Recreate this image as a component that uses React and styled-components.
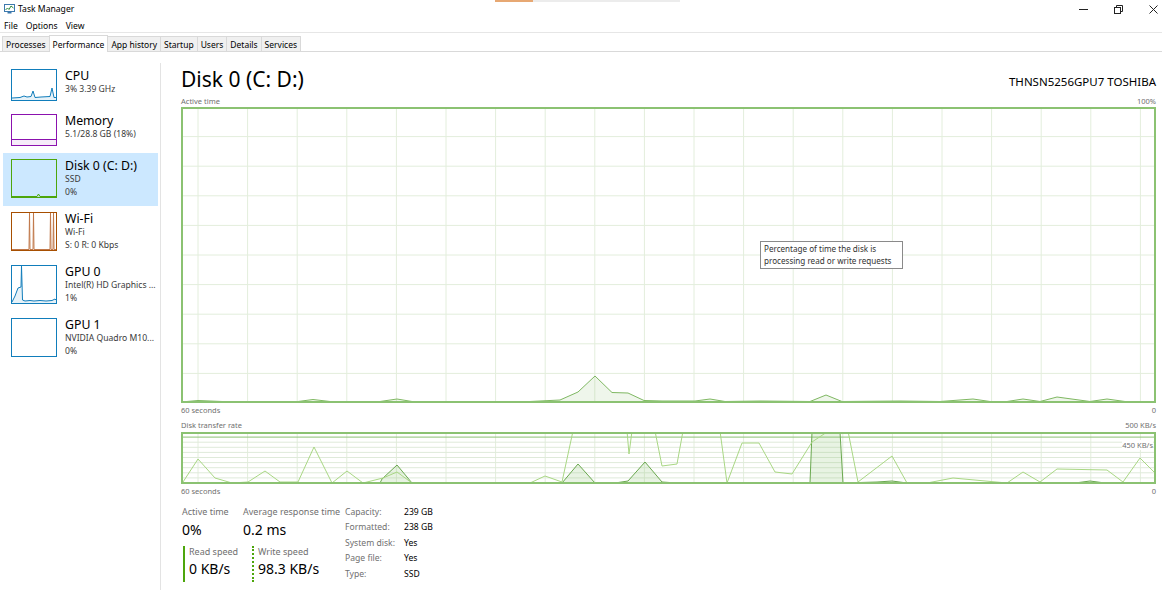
import React from 'react'
import styled, { createGlobalStyle } from 'styled-components'

const GlobalStyle = createGlobalStyle`
  * { box-sizing: border-box; }
  html, body { margin: 0; padding: 0; background: #fff; }
  body {
    font-family: 'Noto Sans', 'Open Sans', sans-serif;
    color: #000;
    overflow: hidden;
  }
`

const Window = styled.div`
  position: relative;
  width: 1162px;
  height: 600px;
  display: flex;
  flex-direction: column;
  background: #fff;
  overflow: hidden;
`
const Artifact = styled.div`
  position: absolute;
  top: 0;
  left: ${props => props.$left}px;
  width: ${props => props.$width}px;
  height: 2px;
  background: ${props => props.$color};
`
const TitleBar = styled.div`
  height: 18px;
  display: flex;
  align-items: center;
  padding-left: 4px;
`
const AppTitle = styled.span`
  font-size: 8.6px;
  margin-left: 3px;
  line-height: 12px;
`
const Controls = styled.div`
  margin-left: auto;
  display: flex;
  align-items: center;
  gap: 26px;
  padding-right: 4px;
  height: 18px;
`
const MenuBar = styled.div`
  height: 15px;
  display: flex;
  align-items: center;
  gap: 8px;
  padding: 1px 0 0 4px;
  border-bottom: 1px solid #e6e6e6;
  font-size: 8.6px;
`
const TabBar = styled.div`
  height: 19px;
  display: flex;
  align-items: flex-end;
  padding-left: 2px;
  border-bottom: 1px solid #d9d9d9;
`
const Tab = styled.div`
  position: relative;
  height: ${props => (props.$active ? 17 : 15)}px;
  margin-bottom: ${props => (props.$active ? -1 : 0)}px;
  margin-right: -1px;
  padding: 0 3px;
  display: flex;
  align-items: center;
  font-size: 8.5px;
  background: ${props => (props.$active ? '#fff' : '#f0f0f0')};
  border: 1px solid #d9d9d9;
  border-bottom: 0;
  z-index: ${props => (props.$active ? 1 : 0)};
`
const Body = styled.div`
  flex: 1;
  display: flex;
  padding-top: 11px;
`
const Sidebar = styled.div`
  width: 161px;
  border-right: 1px solid #e3e3e3;
  margin-bottom: 10px;
`
const SideItem = styled.div`
  margin-left: 3px;
  width: 155px;
  height: ${props => props.$height}px;
  display: flex;
  gap: 8px;
  padding: 6px 0 0 8px;
  background: ${props => (props.$selected ? '#cce8ff' : 'transparent')};
`
const Thumb = styled.div`
  width: 46px;
  height: ${props => props.$height}px;
  border: 1px solid ${props => props.$color};
  flex-shrink: 0;
  svg { display: block; }
`
const SideText = styled.div`
  margin-top: -1px;
  display: flex;
  flex-direction: column;
  white-space: nowrap;
`
const SideName = styled.div`
  font-size: 12.3px;
  line-height: 15px;
`
const SideSub = styled.div`
  font-size: 8.6px;
  line-height: 13px;
  color: #3a3a3a;
`
const Main = styled.div`
  flex: 1;
  padding: 3px 6px 0 20px;
  display: flex;
  flex-direction: column;
`
const HeaderRow = styled.div`
  display: flex;
  justify-content: space-between;
  align-items: center;
  height: 26px;
`
const DiskTitle = styled.div`
  font-size: 21px;
  line-height: 26px;
`
const Model = styled.div`
  font-size: 11.5px;
  line-height: 14px;
  padding-top: 6px;
`
const AxisRow = styled.div`
  display: flex;
  justify-content: space-between;
  font-size: 7.5px;
  line-height: 10px;
  color: #707070;
  margin-top: ${props => props.$top || 0}px;
`
const Graph = styled.div`
  position: relative;
  width: 975px;
  height: ${props => props.$height}px;
  margin-top: ${props => props.$top || 0}px;
  svg { display: block; }
`
const Tooltip = styled.div`
  position: absolute;
  left: 579px;
  top: 134px;
  padding: 1px 10px 1px 3px;
  border: 1px solid #8a8a8a;
  background: #fff;
  font-size: 8.1px;
  line-height: 12px;
  color: #333;
  white-space: nowrap;
`
const InnerLabel = styled.div`
  position: absolute;
  right: 3px;
  top: 8px;
  font-size: 7.5px;
  line-height: 10px;
  color: #707070;
  background: #fff;
`
const Stats = styled.div`
  display: flex;
  margin-top: 10px;
`
const LeftStats = styled.div`
  width: 164px;
  display: flex;
  flex-direction: column;
`
const StatRow = styled.div`
  display: flex;
  padding-left: ${props => props.$pad || 0}px;
  margin-top: ${props => props.$top || 0}px;
`
const StatBlock = styled.div`
  width: ${props => props.$width}px;
  display: flex;
  flex-direction: column;
  white-space: nowrap;
`
const SpeedBlock = styled.div`
  width: ${props => props.$width}px;
  height: 36px;
  padding-left: 4px;
  border-left: 2px ${props => (props.$dotted ? 'dotted' : 'solid')} #4da60c;
  display: flex;
  flex-direction: column;
  white-space: nowrap;
`
const StatLabel = styled.div`
  font-size: 9px;
  line-height: 12px;
  color: #707070;
`
const StatValue = styled.div`
  font-size: 14px;
  line-height: ${props => props.$lh || 20}px;
  margin-top: ${props => props.$top || 0}px;
`
const PropGrid = styled.div`
  display: grid;
  grid-template-columns: 59px auto;
  margin-top: -1px;
  font-size: 8.6px;
  line-height: 14.75px;
`
const PropKey = styled.div`
  color: #707070;
`
const PropVal = styled.div`
  color: #000;
`

const pts = arr => arr.map(p => p.join(',')).join(' ')

const activePoints = [
  [181, 403], [198, 401.5], [222, 402.5], [240, 403], [298, 402.5], [313, 400.5], [330, 402.5],
  [380, 402.5], [397, 400], [415, 403], [530, 402.5], [560, 401], [578, 393], [595, 377],
  [612, 393.5], [628, 394], [644, 401.5], [662, 402], [695, 402], [710, 400], [725, 402.5],
  [760, 402], [810, 402.5], [826, 396], [842, 402.5], [900, 402], [940, 402.5], [973, 400],
  [990, 402.5], [1007, 402.5], [1023, 400], [1040, 402.5], [1057, 398], [1090, 402.5],
  [1107, 400], [1125, 402.5], [1156, 402.5]
]

const readPoints = [
  [181, 484], [183, 483], [198, 460], [215, 479], [232, 484], [248, 483], [265, 472], [280, 483],
  [298, 483], [314, 448], [332, 484], [347, 472], [363, 484], [383, 479], [397, 473], [412, 484],
  [530, 484], [545, 477], [562, 483], [573, 432], [627, 432], [629, 455], [632, 432], [655, 432],
  [662, 467], [677, 465], [683, 432], [720, 432], [727, 484], [742, 444], [759, 444], [775, 473],
  [792, 475], [812, 443], [827, 433], [848, 432], [858, 483], [892, 457], [907, 484], [927, 484],
  [953, 479], [1007, 484], [1023, 473], [1040, 483], [1057, 470], [1107, 471], [1123, 483],
  [1140, 459], [1156, 475]
]

const writePoints = [
  [181, 484], [380, 484], [382, 480], [397, 466], [412, 484], [562, 484], [578, 465], [595, 484],
  [615, 484], [628, 482], [645, 463], [662, 483], [677, 484], [810, 484], [812, 433], [840, 433],
  [843, 484], [877, 483], [892, 482], [907, 484], [1075, 484], [1090, 482], [1105, 484], [1156, 484]
]

const vLines = Array.from({ length: 20 }, (_, i) => 198 + 49.6 * i)

function ActiveGraph() {
  const hLines = Array.from({ length: 9 }, (_, j) => 108 + 29.6 * (j + 1))
  return (
    <svg width="975" height="296" viewBox="181 108 975 296">
      {vLines.map(x => <line key={x} x1={x} y1={108} x2={x} y2={404} stroke="#e3eedc" strokeWidth="1" />)}
      {hLines.map(y => <line key={y} x1={181} y1={y} x2={1156} y2={y} stroke="#e3eedc" strokeWidth="1" />)}
      <polygon points={pts([...activePoints, [1156, 404], [181, 404]])} fill="rgba(139,194,114,0.14)" />
      <polyline points={pts(activePoints)} fill="none" stroke="#7fb862" strokeWidth="1" />
      <rect x="182" y="109" width="973" height="294" fill="none" stroke="#8bc272" strokeWidth="2" />
    </svg>
  )
}

function TransferGraph() {
  const hLines = Array.from({ length: 9 }, (_, j) => 433 + 5.1 * (j + 1))
  return (
    <svg width="975" height="52" viewBox="181 433 975 52">
      {vLines.map(x => <line key={x} x1={x} y1={433} x2={x} y2={485} stroke="#e3eedc" strokeWidth="1" />)}
      {hLines.map((y, j) => (
        <line key={y} x1={181} y1={y} x2={1156} y2={y} stroke={j === 0 ? '#8bc272' : '#dfeada'} strokeWidth="1" />
      ))}
      <polygon points={pts(writePoints)} fill="rgba(139,194,114,0.2)" />
      <polyline points={pts(writePoints)} fill="none" stroke="#6aa84f" strokeWidth="1" />
      <polyline points={pts(readPoints)} fill="none" stroke="#a9d784" strokeWidth="1" />
      <rect x="182" y="434" width="973" height="50" fill="none" stroke="#8bc272" strokeWidth="2" />
    </svg>
  )
}

function Spark({ points, color, fill, h }) {
  return (
    <svg width="44" height={h} viewBox={`0 0 44 ${h}`}>
      {fill && <polygon points={`0,${h} ${points} 44,${h}`} fill={fill} />}
      <polyline points={points} fill="none" stroke={color} strokeWidth="1" />
    </svg>
  )
}

function AppIcon() {
  return (
    <svg width="11" height="10" viewBox="0 0 11 10">
      <rect x="0.5" y="0.5" width="10" height="7" fill="#fff" stroke="#3d79ad" />
      <polyline points="1.5,6 3.5,4 5,5.5 7,2 9.5,4" fill="none" stroke="#2f8a3c" strokeWidth="1" />
      <rect x="3.5" y="8" width="4" height="1.5" fill="#3d79ad" />
    </svg>
  )
}

function MinimizeIcon() {
  return (
    <svg width="9" height="9" viewBox="0 0 9 9">
      <line x1="0" y1="4.5" x2="9" y2="4.5" stroke="#222" strokeWidth="1" />
    </svg>
  )
}

function RestoreIcon() {
  return (
    <svg width="9" height="9" viewBox="0 0 9 9">
      <rect x="0.5" y="2.5" width="6" height="6" fill="none" stroke="#222" />
      <polyline points="2.5,2.5 2.5,0.5 8.5,0.5 8.5,6.5 6.5,6.5" fill="none" stroke="#222" />
    </svg>
  )
}

function CloseIcon() {
  return (
    <svg width="9" height="9" viewBox="0 0 9 9">
      <line x1="0.5" y1="0.5" x2="8.5" y2="8.5" stroke="#222" />
      <line x1="8.5" y1="0.5" x2="0.5" y2="8.5" stroke="#222" />
    </svg>
  )
}

const resources = [
  {
    name: 'CPU', lines: ['3%  3.39 GHz'], color: '#117dbb', h: 45, th: 32,
    spark: <Spark h={30} color="#117dbb" fill="rgba(17,125,187,0.1)"
      points="0,28 8,27.5 12,26 15,27 19,26.5 21,21 23,27.5 29,27 38,26.5 40,18 42,27.5 44,27.5" />
  },
  {
    name: 'Memory', lines: ['5.1/28.8 GB (18%)'], color: '#8b12ae', h: 45, th: 32,
    spark: <Spark h={30} color="#8b12ae" fill="rgba(139,18,174,0.08)" points="0,24.5 44,24.5" />
  },
  {
    name: 'Disk 0 (C: D:)', lines: ['SSD', '0%'], color: '#4da60c', h: 53, th: 39, selected: true,
    spark: <Spark h={37} color="#4da60c" fill="rgba(77,166,12,0.1)"
      points="0,36.5 25,36.5 26.5,34 28,36.5 44,36.5" />
  },
  {
    name: 'Wi-Fi', lines: ['Wi-Fi', 'S: 0  R: 0 Kbps'], color: '#a74f01', h: 53, th: 39,
    spark: <Spark h={37} color="#c0784a"
      points="0,36.5 17,36.5 17.5,0 18,36.5 21,36.5 21.5,0 22,36.5 38,36.5 38.5,0 39,36.5 41,36.5 41.5,0 42,36.5 44,36.5" />
  },
  {
    name: 'GPU 0', lines: ['Intel(R) HD Graphics ...', '1%'], color: '#117dbb', h: 53, th: 39,
    spark: <Spark h={37} color="#117dbb" fill="rgba(17,125,187,0.1)"
      points="0,36 3,30 6,22 9,21 9.5,0 10.5,34 13,35 18,34.5 22,35 28,34.5 34,35 40,34.5 43,33 44,34" />
  },
  {
    name: 'GPU 1', lines: ['NVIDIA Quadro M10...', '0%'], color: '#117dbb', h: 53, th: 39,
    spark: null
  }
]

const tabs = ['Processes', 'Performance', 'App history', 'Startup', 'Users', 'Details', 'Services']

const props = [
  ['Capacity:', '239 GB'],
  ['Formatted:', '238 GB'],
  ['System disk:', 'Yes'],
  ['Page file:', 'Yes'],
  ['Type:', 'SSD']
]

export default function App() {
  return (
    <Window>
      <GlobalStyle />
      <Artifact $left={495} $width={38} $color="#e7a873" />
      <Artifact $left={533} $width={147} $color="#ececec" />
      <TitleBar>
        <AppIcon />
        <AppTitle>Task Manager</AppTitle>
        <Controls>
          <MinimizeIcon />
          <RestoreIcon />
          <CloseIcon />
        </Controls>
      </TitleBar>
      <MenuBar>
        <span>File</span>
        <span>Options</span>
        <span>View</span>
      </MenuBar>
      <TabBar>
        {tabs.map(t => (
          <Tab key={t} $active={t === 'Performance'}>{t}</Tab>
        ))}
      </TabBar>
      <Body>
        <Sidebar>
          {resources.map(r => (
            <SideItem key={r.name} $height={r.h} $selected={r.selected}>
              <Thumb $height={r.th} $color={r.color}>{r.spark}</Thumb>
              <SideText>
                <SideName>{r.name}</SideName>
                {r.lines.map(l => <SideSub key={l}>{l}</SideSub>)}
              </SideText>
            </SideItem>
          ))}
        </Sidebar>
        <Main>
          <HeaderRow>
            <DiskTitle>Disk 0 (C: D:)</DiskTitle>
            <Model>THNSN5256GPU7 TOSHIBA</Model>
          </HeaderRow>
          <AxisRow $top={4}>
            <span>Active time</span>
            <span>100%</span>
          </AxisRow>
          <Graph $height={296} $top={1}>
            <ActiveGraph />
            <Tooltip>
              Percentage of time the disk is
              <br />
              processing read or write requests
            </Tooltip>
          </Graph>
          <AxisRow $top={2}>
            <span>60 seconds</span>
            <span>0</span>
          </AxisRow>
          <AxisRow $top={5}>
            <span>Disk transfer rate</span>
            <span>500 KB/s</span>
          </AxisRow>
          <Graph $height={52} $top={2}>
            <TransferGraph />
            <InnerLabel>450 KB/s</InnerLabel>
          </Graph>
          <AxisRow $top={2}>
            <span>60 seconds</span>
            <span>0</span>
          </AxisRow>
          <Stats>
            <LeftStats>
              <StatRow $pad={1}>
                <StatBlock $width={61}>
                  <StatLabel>Active time</StatLabel>
                  <StatValue $top={2}>0%</StatValue>
                </StatBlock>
                <StatBlock $width={100}>
                  <StatLabel>Average response time</StatLabel>
                  <StatValue $top={2}>0.2 ms</StatValue>
                </StatBlock>
              </StatRow>
              <StatRow $pad={2} $top={6}>
                <SpeedBlock $width={69}>
                  <StatLabel>Read speed</StatLabel>
                  <StatValue $lh={22}>0 KB/s</StatValue>
                </SpeedBlock>
                <SpeedBlock $width={90} $dotted>
                  <StatLabel>Write speed</StatLabel>
                  <StatValue $lh={22}>98.3 KB/s</StatValue>
                </SpeedBlock>
              </StatRow>
            </LeftStats>
            <PropGrid>
              {props.map(([k, v]) => (
                <React.Fragment key={k}>
                  <PropKey>{k}</PropKey>
                  <PropVal>{v}</PropVal>
                </React.Fragment>
              ))}
            </PropGrid>
          </Stats>
        </Main>
      </Body>
    </Window>
  )
}
